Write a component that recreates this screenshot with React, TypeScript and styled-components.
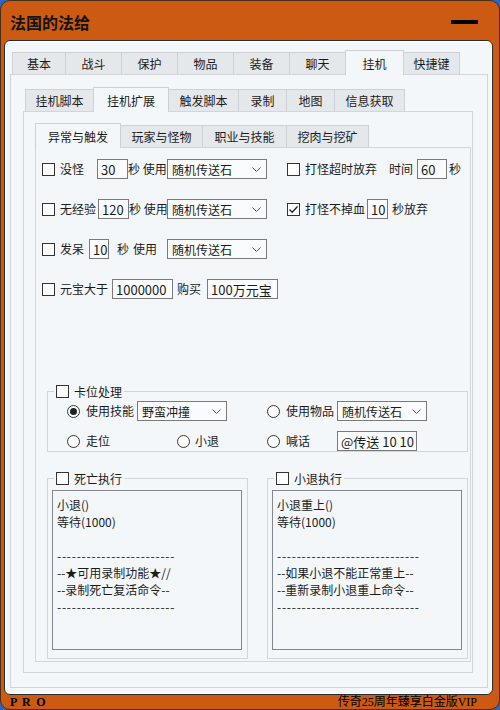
import styled, { createGlobalStyle } from "styled-components";

const GlobalStyle = createGlobalStyle`
  html, body {
    margin: 0;
    padding: 0;
    background: #2d66c2;
  }
  body {
    font-family: "Noto Sans CJK SC", "Microsoft YaHei", sans-serif;
    font-size: 12px;
    color: #1b1b1b;
  }
`;

const Window = styled.div`
  width: 500px;
  height: 710px;
  box-sizing: border-box;
  background: #cc5a12;
  border: 1px solid #4b2e14;
  border-radius: 10px;
  display: flex;
  flex-direction: column;
  overflow: hidden;
`;
const TitleBar = styled.div`
  height: 39px;
  flex-shrink: 0;
  box-sizing: border-box;
  display: flex;
  align-items: center;
  justify-content: space-between;
  padding: 2px 21px 0 9px;
`;
const Title = styled.h1`
  margin: 0;
  font-size: 16px;
  font-weight: bold;
  color: #141414;
  line-height: 1;
`;
const MinButton = styled.div`
  width: 27px;
  height: 4px;
  background: #000;
`;
const Panel = styled.div`
  flex: 1;
  margin: 0 6px 0 3px;
  border: 1px solid #2c2c2c;
  border-radius: 6px;
  background: #f3f7fa;
  box-shadow: inset 0 0 0 1px #fff;
  padding: 9px 4px 6px 5px;
  box-sizing: border-box;
  display: flex;
  flex-direction: column;
`;
const Footer = styled.div`
  height: 14px;
  flex-shrink: 0;
  display: flex;
  align-items: center;
  justify-content: space-between;
  padding: 0 22px 1px 9px;
  box-sizing: border-box;
  font-family: "Liberation Serif", "Noto Sans CJK SC", serif;
  font-size: 12px;
  line-height: 12px;
  color: #000;
`;
const Pro = styled.span`
  letter-spacing: 1.2px;
  font-weight: bold;
`;

const TabGroup = styled.div`
  flex: 1;
  display: flex;
  flex-direction: column;
`;
const TabRow = styled.div<{ $indent: number }>`
  display: flex;
  align-items: flex-end;
  height: 24px;
  padding-left: ${(p) => p.$indent}px;
  flex-shrink: 0;
`;
const Tab = styled.div<{ $w: number; $active?: boolean }>`
  width: ${(p) => p.$w}px;
  height: ${(p) => (p.$active ? 25 : 22)}px;
  margin-bottom: ${(p) => (p.$active ? -1 : 0)}px;
  box-sizing: border-box;
  border: 1px solid #cdd1d5;
  border-bottom: none;
  margin-left: -1px;
  background: ${(p) => (p.$active ? "#f3f7fa" : "#e5e8eb")};
  display: flex;
  align-items: center;
  justify-content: center;
  position: relative;
  z-index: ${(p) => (p.$active ? 1 : 0)};
  white-space: nowrap;
  &:first-child {
    margin-left: 0;
  }
`;
const TabBox = styled.div<{ $pad: string }>`
  flex: 1;
  border: 1px solid #d2d6da;
  background: #f3f7fa;
  padding: ${(p) => p.$pad};
  display: flex;
  flex-direction: column;
`;
const Content = styled.div`
  flex: 1;
  padding: 11px 0 0 6px;
  display: flex;
  flex-direction: column;
`;

const Row = styled.div`
  display: flex;
  align-items: center;
  height: 20px;
  & + & {
    margin-top: 20px;
  }
`;
const LeftCol = styled.div`
  width: 245px;
  display: flex;
  align-items: center;
  flex-shrink: 0;
`;
const Text = styled.span<{ $w?: number; $ml?: number }>`
  display: inline-block;
  white-space: nowrap;
  flex-shrink: 0;
  width: ${(p) => (p.$w ? `${p.$w}px` : "auto")};
  margin-left: ${(p) => p.$ml || 0}px;
  line-height: 16px;
`;
const CheckBox = styled.span`
  width: 13px;
  height: 13px;
  box-sizing: border-box;
  border: 1px solid #333;
  background: #fff;
  flex-shrink: 0;
  display: flex;
  align-items: center;
  justify-content: center;
`;
const RadioBox = styled.span<{ $on?: boolean }>`
  width: 13px;
  height: 13px;
  box-sizing: border-box;
  border: 1px solid #333;
  border-radius: 50%;
  background: #fff;
  flex-shrink: 0;
  display: flex;
  align-items: center;
  justify-content: center;
  &::after {
    content: "";
    width: 7px;
    height: 7px;
    border-radius: 50%;
    background: ${(p) => (p.$on ? "#222" : "transparent")};
  }
`;
const Field = styled.div<{ $w: number }>`
  width: ${(p) => p.$w}px;
  height: 20px;
  box-sizing: border-box;
  border: 1px solid #7a7a7a;
  background: #f9fbfc;
  padding-left: 3px;
  display: flex;
  align-items: center;
  flex-shrink: 0;
  font-size: 13px;
  white-space: nowrap;
  overflow: hidden;
`;
const Select = styled(Field)`
  padding: 0 5px 0 4px;
  justify-content: space-between;
  font-size: 12px;
`;

const Group = styled.fieldset<{ $w: number; $mt: number; $ml: number }>`
  width: ${(p) => p.$w}px;
  margin: ${(p) => p.$mt}px 0 0 ${(p) => p.$ml}px;
  padding: 0;
  border: 1px solid #d2d6da;
  box-sizing: border-box;
  min-width: 0;
`;
const Legend = styled.legend`
  margin-left: 6px;
  padding: 0 2px;
  height: 13px;
  display: flex;
  align-items: center;
`;
const GroupBody = styled.div`
  padding: 3px 0 0 19px;
`;
const Cell = styled.div<{ $w?: number }>`
  display: flex;
  align-items: center;
  width: ${(p) => (p.$w ? `${p.$w}px` : "auto")};
  flex-shrink: 0;
`;
const GroupRow = styled.div`
  display: flex;
  align-items: center;
  height: 20px;
  & + & {
    margin-top: 10px;
  }
`;
const MemoRow = styled.div`
  display: flex;
`;
const Memo = styled.div`
  width: 190px;
  height: 160px;
  box-sizing: border-box;
  margin: 5px 0 8px 4px;
  border: 1px solid #828790;
  background: #f3f7fa;
  padding: 5px 0 0 4px;
  line-height: 17px;
  overflow: hidden;
`;
const MemoLine = styled.div<{ $dash?: boolean }>`
  height: 17px;
  white-space: pre;
  letter-spacing: ${(p) => (p.$dash ? "0.76px" : "0")};
`;

function Check({ on }: { on?: boolean }) {
  return (
    <CheckBox>
      {on && (
        <svg width="11" height="11" viewBox="0 0 11 11">
          <polyline points="1.5,5.5 4.2,8.2 9.5,2.5" fill="none" stroke="#222" strokeWidth="1.3" />
        </svg>
      )}
    </CheckBox>
  );
}

function Drop({ w, text }: { w: number; text: string }) {
  return (
    <Select $w={w}>
      <span>{text}</span>
      <svg width="9" height="5" viewBox="0 0 9 5">
        <polyline points="0.5,0.5 4.5,4.5 8.5,0.5" fill="none" stroke="#555" strokeWidth="1" />
      </svg>
    </Select>
  );
}

const topTabs: [string, number][] = [
  ["基本", 54],
  ["战斗", 57],
  ["保护", 57],
  ["物品", 57],
  ["装备", 57],
  ["聊天", 57],
  ["挂机", 59],
  ["快捷键", 57],
];
const subTabs: [string, number][] = [
  ["挂机脚本", 69],
  ["挂机扩展", 76],
  ["触发脚本", 71],
  ["录制", 49],
  ["地图", 49],
  ["信息获取", 71],
];
const thirdTabs: [string, number][] = [
  ["异常与触发", 86],
  ["玩家与怪物", 83],
  ["职业与技能", 85],
  ["挖肉与挖矿", 83],
];

const deathLines = [
  "小退()",
  "等待(1000)",
  "",
  "------------------------",
  "--★可用录制功能★//",
  "--录制死亡复活命令--",
  "------------------------",
];
const relogLines = [
  "小退重上()",
  "等待(1000)",
  "",
  "-----------------------------",
  "--如果小退不能正常重上--",
  "--重新录制小退重上命令--",
  "-----------------------------",
];

function MemoText({ lines }: { lines: string[] }) {
  return (
    <Memo>
      {lines.map((l, i) => (
        <MemoLine key={i} $dash={/^-+$/.test(l)}>
          {l}
        </MemoLine>
      ))}
    </Memo>
  );
}

export default function App() {
  return (
    <>
      <GlobalStyle />
      <Window>
        <TitleBar>
          <Title>法国的法给</Title>
          <MinButton />
        </TitleBar>
        <Panel>
          <TabGroup>
            <TabRow $indent={2}>
              {topTabs.map(([t, w]) => (
                <Tab key={t} $w={w} $active={t === "挂机"}>
                  {t}
                </Tab>
              ))}
            </TabRow>
            <TabBox $pad="12px 14px 14px 12px">
              <TabGroup>
                <TabRow $indent={2}>
                  {subTabs.map(([t, w]) => (
                    <Tab key={t} $w={w} $active={t === "挂机扩展"}>
                      {t}
                    </Tab>
                  ))}
                </TabRow>
                <TabBox $pad="11px 1px 10px 11px">
                  <TabGroup>
                    <TabRow $indent={0}>
                      {thirdTabs.map(([t, w]) => (
                        <Tab key={t} $w={w} $active={t === "异常与触发"}>
                          {t}
                        </Tab>
                      ))}
                    </TabRow>
                    <TabBox $pad="0">
                      <Content>
                        <Row>
                          <LeftCol>
                            <Check />
                            <Text $ml={5} $w={37}>没怪</Text>
                            <Field $w={31}>30</Field>
                            <Text $w={39}>秒 使用</Text>
                            <Drop w={100} text="随机传送石" />
                          </LeftCol>
                          <Check />
                          <Text $ml={5}>打怪超时放弃</Text>
                          <Text $ml={12}>时间</Text>
                          <Field $w={30} style={{ marginLeft: 4 }}>60</Field>
                          <Text $ml={2}>秒</Text>
                        </Row>
                        <Row>
                          <LeftCol>
                            <Check />
                            <Text $ml={5} $w={38}>无经验</Text>
                            <Field $w={31}>120</Field>
                            <Text $w={38}>秒 使用</Text>
                            <Drop w={100} text="随机传送石" />
                          </LeftCol>
                          <Check on />
                          <Text $ml={5}>打怪不掉血</Text>
                          <Field $w={21} style={{ marginLeft: 2 }}>10</Field>
                          <Text $ml={4}>秒放弃</Text>
                        </Row>
                        <Row>
                          <LeftCol>
                            <Check />
                            <Text $ml={5} $w={29}>发呆</Text>
                            <Field $w={20}>10</Field>
                            <Text $ml={8} $w={16}>秒</Text>
                            <Text $w={34}>使用</Text>
                            <Drop w={100} text="随机传送石" />
                          </LeftCol>
                        </Row>
                        <Row>
                          <LeftCol>
                            <Check />
                            <Text $ml={5} $w={52}>元宝大于</Text>
                            <Field $w={61}>1000000</Field>
                            <Text $ml={4} $w={30}>购买</Text>
                            <Field $w={71}>100万元宝</Field>
                          </LeftCol>
                        </Row>

                        <Group $w={421} $mt={86} $ml={5}>
                          <Legend>
                            <Check />
                            <Text $ml={5}>卡位处理</Text>
                          </Legend>
                          <GroupBody>
                            <GroupRow>
                              <Cell $w={200}>
                                <RadioBox $on />
                                <Text $ml={6} $w={51}>使用技能</Text>
                                <Drop w={90} text="野蛮冲撞" />
                              </Cell>
                              <Cell>
                                <RadioBox />
                                <Text $ml={6} $w={51}>使用物品</Text>
                                <Drop w={90} text="随机传送石" />
                              </Cell>
                            </GroupRow>
                            <GroupRow>
                              <Cell $w={110}>
                                <RadioBox />
                                <Text $ml={6}>走位</Text>
                              </Cell>
                              <Cell $w={90}>
                                <RadioBox />
                                <Text $ml={5}>小退</Text>
                              </Cell>
                              <Cell>
                                <RadioBox />
                                <Text $ml={6} $w={51}>喊话</Text>
                                <Field $w={80}>@传送 10 10</Field>
                              </Cell>
                            </GroupRow>
                          </GroupBody>
                        </Group>

                        <MemoRow>
                          <Group $w={201} $mt={20} $ml={5}>
                            <Legend>
                              <Check />
                              <Text $ml={5}>死亡执行</Text>
                            </Legend>
                            <MemoText lines={deathLines} />
                          </Group>
                          <Group $w={201} $mt={20} $ml={19}>
                            <Legend>
                              <Check />
                              <Text $ml={5}>小退执行</Text>
                            </Legend>
                            <MemoText lines={relogLines} />
                          </Group>
                        </MemoRow>
                      </Content>
                    </TabBox>
                  </TabGroup>
                </TabBox>
              </TabGroup>
            </TabBox>
          </TabGroup>
        </Panel>
        <Footer>
          <Pro>P R O</Pro>
          <span>传奇25周年臻享白金版VIP</span>
        </Footer>
      </Window>
    </>
  );
}
